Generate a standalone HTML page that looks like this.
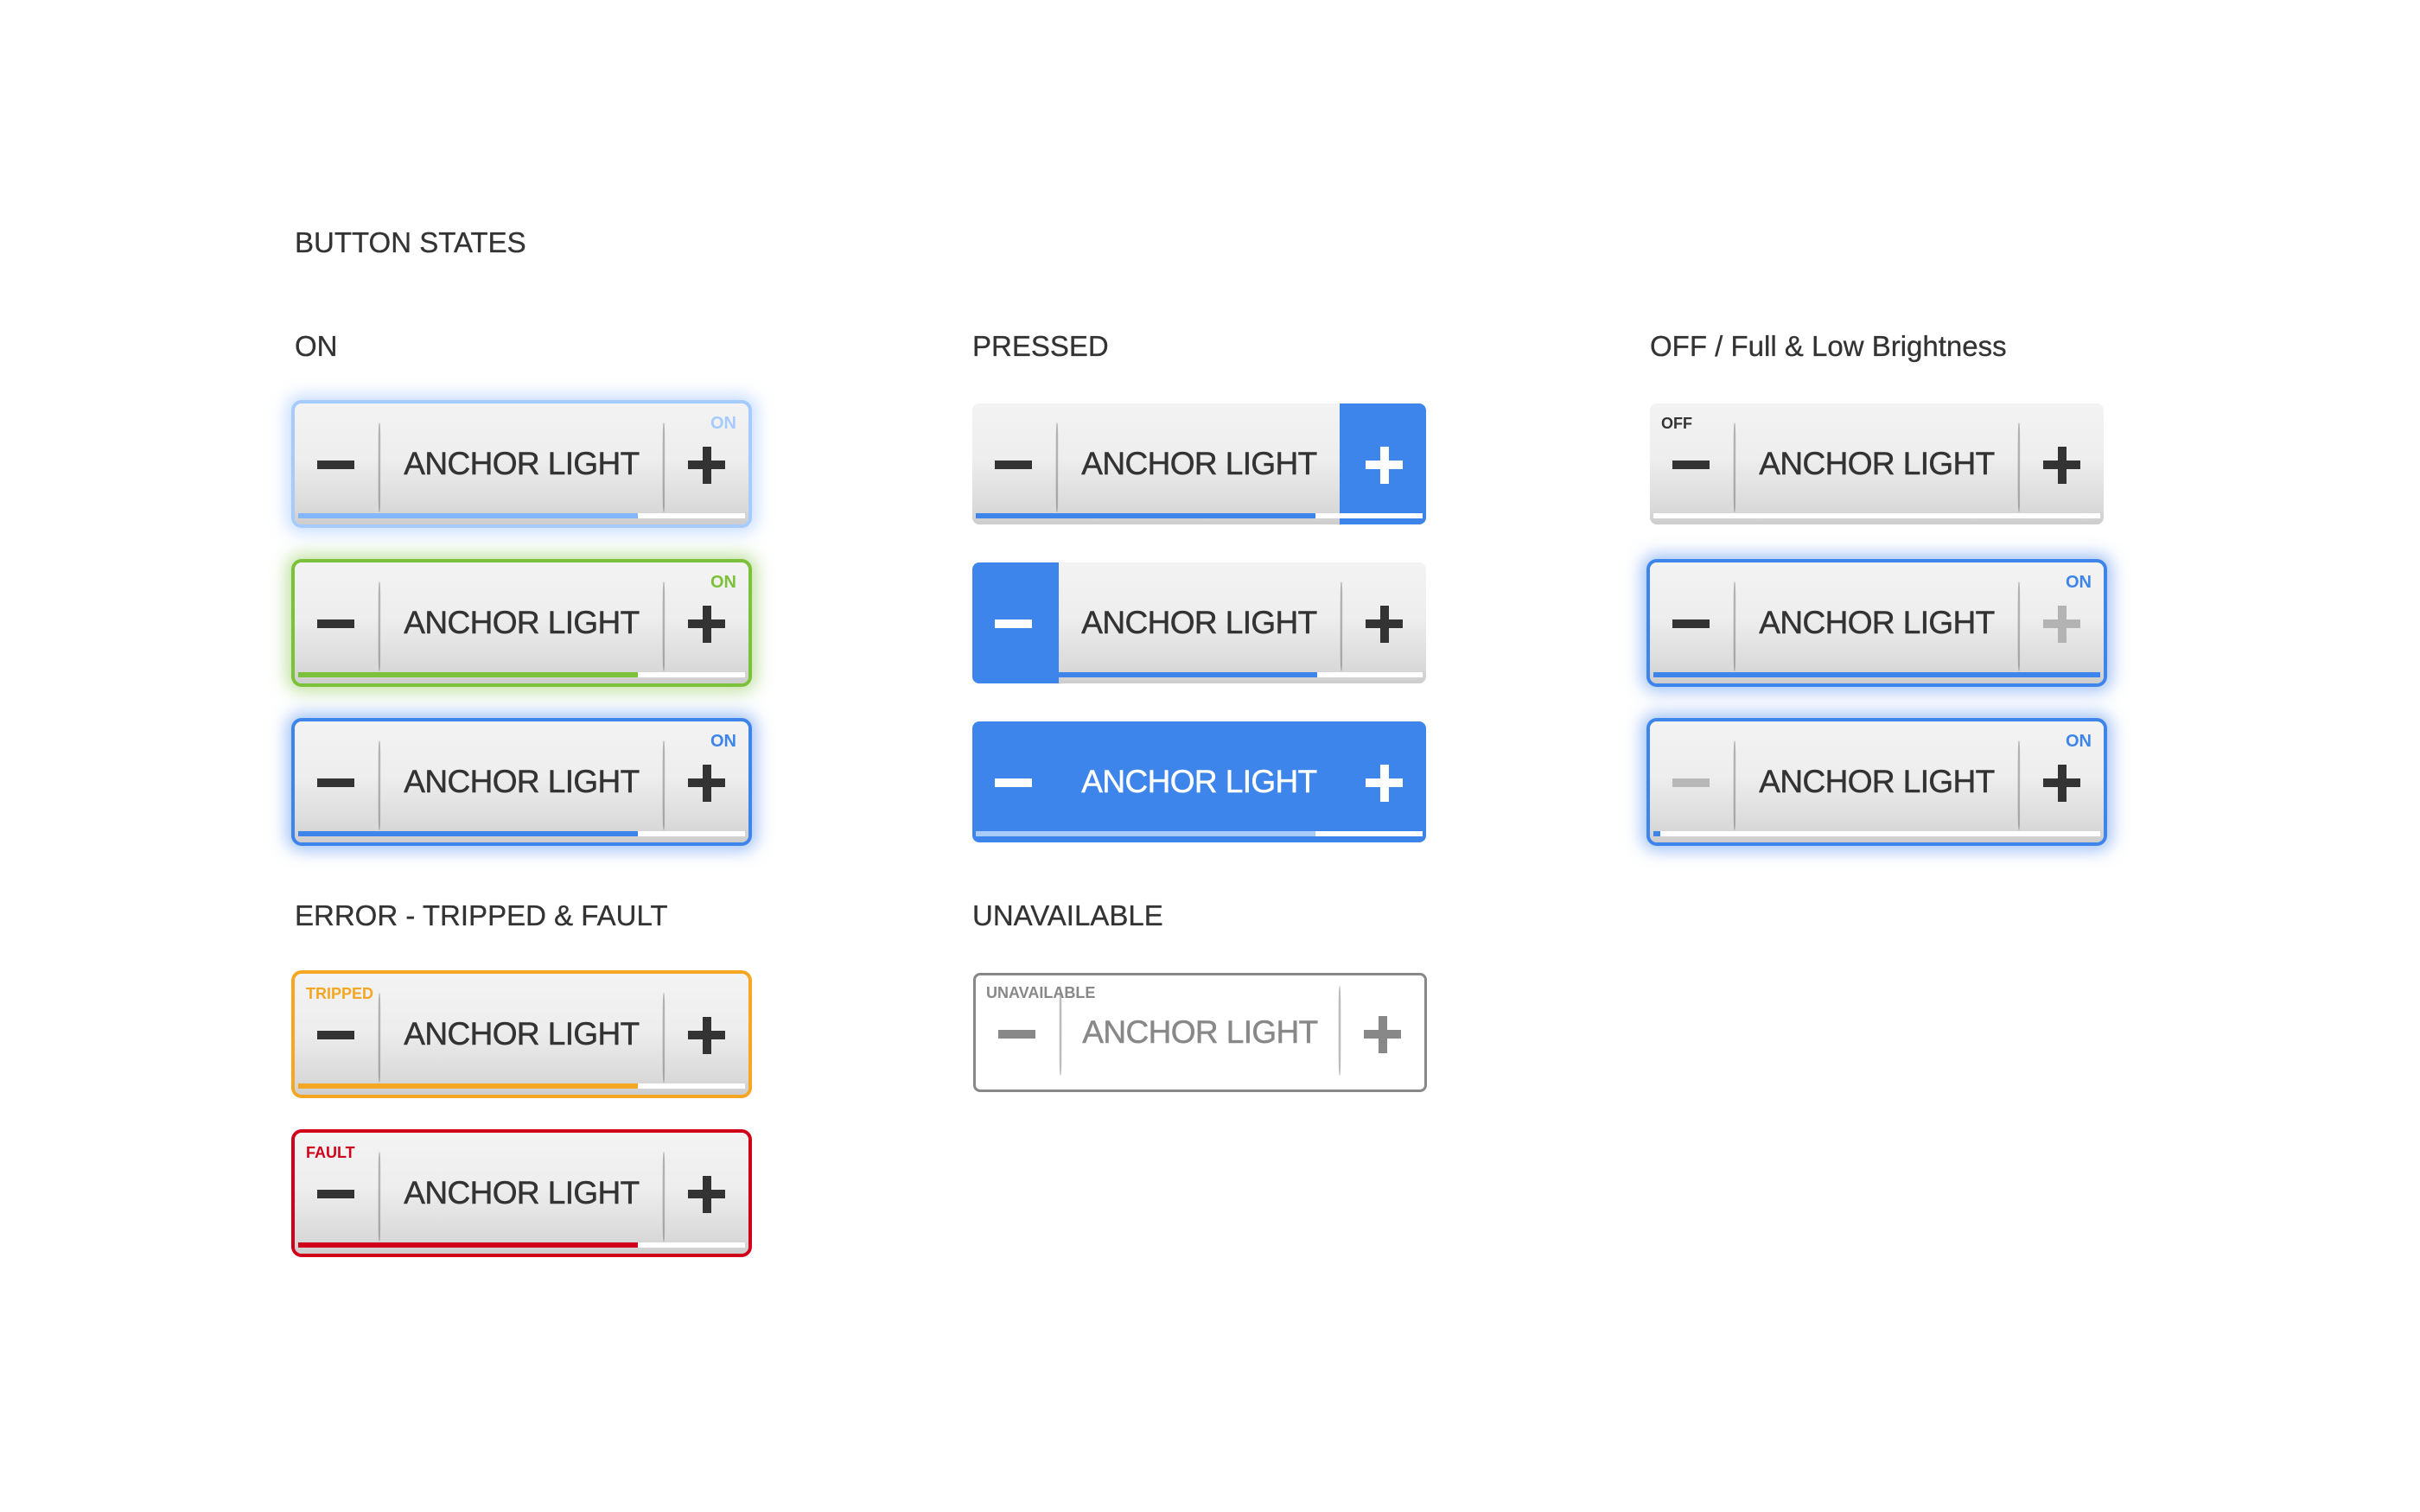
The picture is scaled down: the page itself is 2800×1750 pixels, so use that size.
<!DOCTYPE html>
<html><head><meta charset="utf-8"><style>
*{margin:0;padding:0;box-sizing:border-box}
body{width:2800px;height:1750px;background:#fff;position:relative;overflow:hidden;font-family:"Liberation Sans",sans-serif;color:#333}
.h{position:absolute;font-size:33px;line-height:33px;color:#333;white-space:nowrap;-webkit-text-stroke:0.3px #333}
.b{position:absolute;width:525px;height:140px;border-radius:8px;overflow:hidden;background:linear-gradient(#f3f3f3 0%,#eeeeee 45%,#d9d9d9 88%,#cdcdcd 100%)}
.b .t{position:absolute;left:98px;right:98px;top:0;height:140px;line-height:140px;text-align:center;font-size:37px;letter-spacing:-0.6px;color:#333;white-space:nowrap;-webkit-text-stroke:0.5px currentColor}
.b .m{position:absolute;left:26px;top:66px;width:43px;height:10px;background:#333}
.b .p1{position:absolute;right:27px;top:66px;width:43px;height:10px;background:#333}
.b .p2{position:absolute;right:43.5px;top:50px;width:10px;height:43px;background:#333}
.b .d{position:absolute;top:22px;width:4px;height:104px;background:linear-gradient(90deg,rgba(0,0,0,0),rgba(0,0,0,.35),rgba(255,255,255,.8));border-radius:50%}
.b .d1{left:96px}.b .d2{right:96px}
.b .bar{position:absolute;left:4px;right:4px;top:127px;height:6px;background:#fff}
.b .bar i{position:absolute;left:0;top:0;bottom:0;width:76%;display:block}
.b .lab{position:absolute;font-size:20px;font-weight:bold;line-height:20px}
.b .on{right:14px;top:13px}
.b .tl{left:13px;top:13px}
</style></head><body>
<div class="h" style="left:341px;top:264px">BUTTON STATES</div>
<div class="h" style="left:341px;top:384px">ON</div>
<div class="h" style="left:1125px;top:384px">PRESSED</div>
<div class="h" style="left:1909px;top:384px">OFF / Full &amp; Low Brightness</div>
<div class="h" style="left:341px;top:1043px">ERROR - TRIPPED &amp; FAULT</div>
<div class="h" style="left:1125px;top:1043px">UNAVAILABLE</div>

<div class="b" style="left:341px;top:467px;box-shadow:0 0 0 4px #a6cbff,0 0 18px 10px rgba(150,190,255,.5)">
<div class="m"></div><div class="d d1"></div><div class="t">ANCHOR LIGHT</div><div class="d d2"></div><div class="p1"></div><div class="p2"></div>
<div class="lab on" style="color:#a6cbff">ON</div><div class="bar"><i style="background:#85b5fb"></i></div></div>

<div class="b" style="left:341px;top:651px;box-shadow:0 0 0 4px #7cc13a,0 0 18px 10px rgba(140,200,80,.5)">
<div class="m"></div><div class="d d1"></div><div class="t">ANCHOR LIGHT</div><div class="d d2"></div><div class="p1"></div><div class="p2"></div>
<div class="lab on" style="color:#7cc13a">ON</div><div class="bar"><i style="background:#7cc13a"></i></div></div>

<div class="b" style="left:341px;top:835px;box-shadow:0 0 0 4px #3d85ea,0 0 18px 10px rgba(80,140,240,.5)">
<div class="m"></div><div class="d d1"></div><div class="t">ANCHOR LIGHT</div><div class="d d2"></div><div class="p1"></div><div class="p2"></div>
<div class="lab on" style="color:#3d85ea">ON</div><div class="bar"><i style="background:#3d85ea"></i></div></div>

<div class="b" style="left:1125px;top:467px">
<div class="m"></div><div class="d d1"></div><div class="t">ANCHOR LIGHT</div>
<div style="position:absolute;right:0;top:0;width:100px;height:140px;background:#3d85ea"></div>
<div class="bar"><i style="background:#3d85ea"></i></div>
<div class="p1" style="background:#fff"></div><div class="p2" style="background:#fff"></div></div>

<div class="b" style="left:1125px;top:651px">
<div style="position:absolute;left:0;top:0;width:100px;height:140px;background:#3d85ea"></div>
<div class="m" style="background:#fff"></div><div class="t">ANCHOR LIGHT</div><div class="d d2"></div><div class="p1"></div><div class="p2"></div>
<div class="bar" style="left:100px"><i style="background:#3d85ea;width:71%"></i></div></div>

<div class="b" style="left:1125px;top:835px;background:#3d85ea">
<div class="m" style="background:#fff"></div><div class="t" style="color:#fff">ANCHOR LIGHT</div><div class="p1" style="background:#fff"></div><div class="p2" style="background:#fff"></div>
<div class="bar"><i style="background:#a9cbfb"></i></div></div>

<div class="b" style="left:1909px;top:467px">
<div class="m"></div><div class="d d1"></div><div class="t">ANCHOR LIGHT</div><div class="d d2"></div><div class="p1"></div><div class="p2"></div>
<div class="lab tl" style="color:#333;font-size:18px">OFF</div><div class="bar"></div></div>

<div class="b" style="left:1909px;top:651px;box-shadow:0 0 0 4px #3d85ea,0 0 18px 10px rgba(80,140,240,.5)">
<div class="m"></div><div class="d d1"></div><div class="t">ANCHOR LIGHT</div><div class="d d2"></div><div class="p1" style="background:#b3b3b3"></div><div class="p2" style="background:#b3b3b3"></div>
<div class="lab on" style="color:#3d85ea">ON</div><div class="bar"><i style="background:#3d85ea;width:100%"></i></div></div>

<div class="b" style="left:1909px;top:835px;box-shadow:0 0 0 4px #3d85ea,0 0 18px 10px rgba(80,140,240,.5)">
<div class="m" style="background:#b8b8b8"></div><div class="d d1"></div><div class="t">ANCHOR LIGHT</div><div class="d d2"></div><div class="p1"></div><div class="p2"></div>
<div class="lab on" style="color:#3d85ea">ON</div><div class="bar"><i style="background:#3d85ea;width:8px"></i></div></div>

<div class="b" style="left:341px;top:1127px;box-shadow:0 0 0 4px #f5a623">
<div class="m"></div><div class="d d1"></div><div class="t">ANCHOR LIGHT</div><div class="d d2"></div><div class="p1"></div><div class="p2"></div>
<div class="lab tl" style="color:#f5a623;font-size:18px">TRIPPED</div><div class="bar"><i style="background:#f5a623"></i></div></div>

<div class="b" style="left:341px;top:1311px;box-shadow:0 0 0 4px #d0021b">
<div class="m"></div><div class="d d1"></div><div class="t">ANCHOR LIGHT</div><div class="d d2"></div><div class="p1"></div><div class="p2"></div>
<div class="lab tl" style="color:#d0021b;font-size:18px">FAULT</div><div class="bar"><i style="background:#d0021b"></i></div></div>

<div class="b" style="left:1126px;top:1126px;height:138px;background:#fff;border:3px solid #888">
<div class="m" style="background:#888;top:63px"></div><div class="d d1" style="top:12px"></div><div class="t" style="color:#888;height:132px;line-height:132px">ANCHOR LIGHT</div><div class="d d2" style="top:12px"></div><div class="p1" style="background:#888;top:63px"></div><div class="p2" style="background:#888;top:47px"></div>
<div class="lab tl" style="color:#888;font-size:18px;top:10px;left:12px">UNAVAILABLE</div></div>
</body></html>
